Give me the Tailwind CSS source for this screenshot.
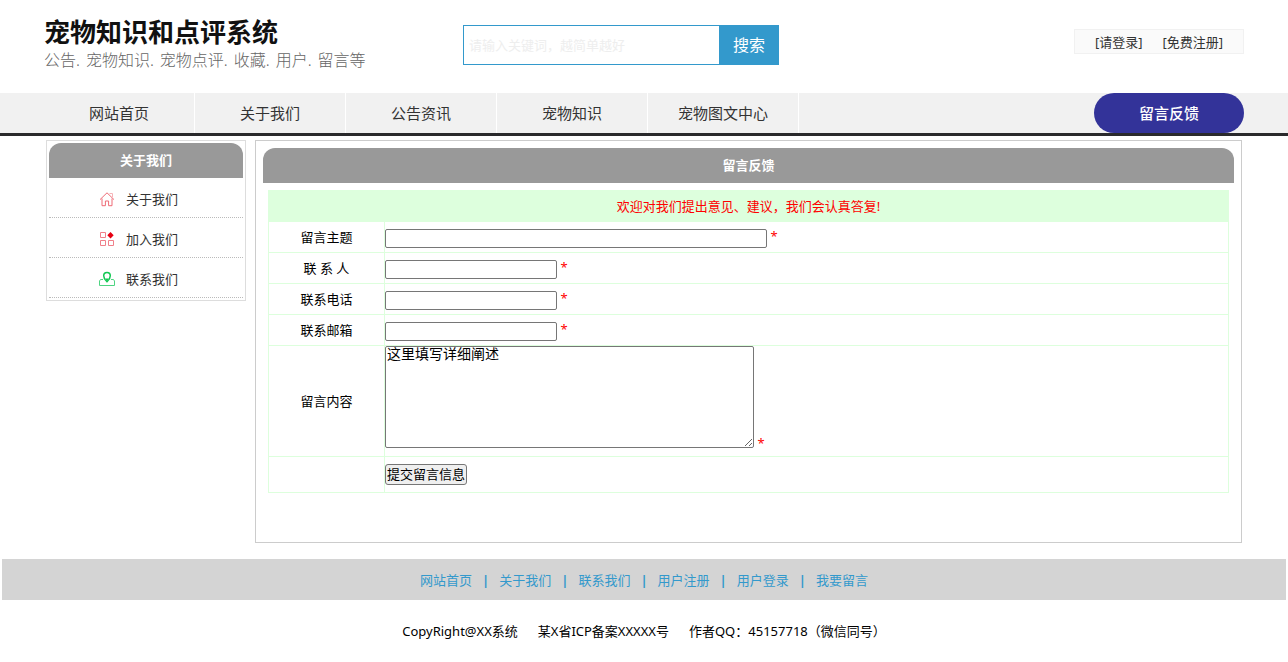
<!DOCTYPE html>
<html lang="zh-CN">
<head>
<meta charset="utf-8">
<meta name="viewport" content="width=device-width, initial-scale=1">
<title>留言反馈 - 宠物知识和点评系统</title>
<script src="https://cdn.jsdelivr.net/npm/@tailwindcss/browser@4"></script>
</head>
<body class="bg-white font-['Noto_Sans','Noto_Sans_CJK_SC',sans-serif] text-[13px] leading-5 text-black">

<header class="mx-auto flex h-[93px] max-w-[1200px] items-start">
  <div class="w-[419px] shrink-0 pt-4">
    <h1 class="text-[26px] leading-8 font-bold text-[#111]">宠物知识和点评系统</h1>
    <p class="flex gap-1.5 text-base leading-6 font-light text-[#666]"><span>公告.</span><span>宠物知识.</span><span>宠物点评.</span><span>收藏.</span><span>用户.</span><span>留言等</span></p>
  </div>
  <form class="mt-[25px] flex h-10 w-[316px] shrink-0">
    <input type="text" aria-label="关键词" placeholder="请输入关键词，越简单越好" class="min-w-0 flex-1 border border-r-0 border-[#3399cc] px-[5px] text-[13px] outline-none placeholder:text-[#eeeeee]">
    <button type="button" class="w-15 bg-[#3399cc] text-base text-white">搜索</button>
  </form>
  <div class="mt-[29px] ml-auto flex h-[25px] items-center justify-center gap-5 border border-[#f1f1f1] bg-[#fafafa] px-5 text-[#333]">
    <a href="#">[请登录]</a>
    <a href="#">[免费注册]</a>
  </div>
</header>

<nav class="border-b-[3px] border-[#2a2a2c] bg-[#f1f1f1]">
  <div class="mx-auto flex h-10 max-w-[1200px] text-[15px] leading-10 text-[#333]">
    <a href="#" class="w-[151px] border-r border-white text-center">网站首页</a>
    <a href="#" class="w-[151px] border-r border-white text-center">关于我们</a>
    <a href="#" class="w-[151px] border-r border-white text-center">公告资讯</a>
    <a href="#" class="w-[151px] border-r border-white text-center">宠物知识</a>
    <a href="#" class="w-[151px] border-r border-white text-center">宠物图文中心</a>
    <a href="#" class="ml-auto w-[150px] rounded-[20px] bg-[#333399] text-center font-medium text-white">留言反馈</a>
  </div>
</nav>

<div class="mx-auto mt-1 flex max-w-[1200px] items-start gap-[9px] px-0.5">
  <aside class="w-[200px] shrink-0 border border-[#dddddd] p-0.5">
    <h2 class="rounded-t-[12px] bg-[#999999] text-center leading-[35px] font-bold text-white">关于我们</h2>
    <ul class="text-[#333]">
      <li class="h-10 border-b border-dotted border-[#bbbbbb]">
        <a href="#" class="flex h-full items-center gap-[11px] pt-0.5 pl-[50px]">
          <svg class="h-4 w-4" viewBox="0 0 16 16" fill="none" stroke="#ee6b76" stroke-width="1"><path d="M1 8.600 8 1.800l7 6.800M3 7.500v7.200h3.400V10h3.200v4.700H13V7.500"/><path d="M10.500 2.500h3v3.500" stroke="#f7b4b8"/></svg>
          关于我们</a>
      </li>
      <li class="h-10 border-b border-dotted border-[#bbbbbb]">
        <a href="#" class="flex h-full items-center gap-[11px] pt-0.5 pl-[50px]">
          <svg class="h-4 w-4" viewBox="0 0 16 16" fill="none" stroke="#f0808a" stroke-width="1"><path d="M1.500 1.500h5v5h-5zM1.500 9.500h5v5h-5zM9.500 9.500h5v5h-5z"/><path d="m11.500 1 3.200 3.200-3.200 3.200-3.200-3.200z" fill="#e60012" stroke="none"/></svg>
          加入我们</a>
      </li>
      <li class="h-10 border-b border-dotted border-[#bbbbbb]">
        <a href="#" class="flex h-full items-center gap-[11px] pt-0.5 pl-[50px]">
          <svg class="h-4 w-4" viewBox="0 0 16 16" fill="none"><path d="M4 8.500H1.500l-1 1.500v4.500h15V10l-1-1.500H12" stroke="#4fd482"/><path d="M8 10.800C5.800 8.800 4.700 7 4.700 4.700a3.300 3.300 0 0 1 6.600 0C11.300 7 10.200 8.800 8 10.800z" stroke="#12c853" stroke-width="1.500"/><path d="M6 7.500h4L8 10.500z" fill="#12c853"/></svg>
          联系我们</a>
      </li>
    </ul>
  </aside>

  <main class="min-h-[403px] min-w-0 flex-1 border border-[#cccccc] p-[7px]">
    <h2 class="rounded-t-[12px] bg-[#999999] text-center leading-[35px] font-bold text-white">留言反馈</h2>
    <form class="px-[5px] pt-[7px]">
      <table class="w-full table-fixed border-collapse border border-[#ddffdd]">
        <colgroup><col class="w-[116px]"><col></colgroup>
        <thead>
          <tr class="h-[31px] bg-[#ddffdd] text-[#ff0000]"><th colspan="2" class="border border-[#ddffdd] p-0 text-center font-normal">欢迎对我们提出意见、建议，我们会认真答复!</th></tr>
        </thead>
        <tbody>
          <tr class="h-[31px]">
            <th class="border border-[#ddffdd] p-0 text-center font-normal"><label for="subject">留言主题</label></th>
            <td class="border border-[#ddffdd] p-0"><input id="subject" type="text" class="h-[19px] w-[382px] rounded-xs border border-[#767676] px-px align-middle"> <span class="text-[#ff0000]">*</span></td>
          </tr>
          <tr class="h-[31px]">
            <th class="border border-[#ddffdd] p-0 text-center font-normal"><label for="contact">联 系 人</label></th>
            <td class="border border-[#ddffdd] p-0"><input id="contact" type="text" class="h-[19px] w-[172px] rounded-xs border border-[#767676] px-px align-middle"> <span class="text-[#ff0000]">*</span></td>
          </tr>
          <tr class="h-[31px]">
            <th class="border border-[#ddffdd] p-0 text-center font-normal"><label for="phone">联系电话</label></th>
            <td class="border border-[#ddffdd] p-0"><input id="phone" type="tel" class="h-[19px] w-[172px] rounded-xs border border-[#767676] px-px align-middle"> <span class="text-[#ff0000]">*</span></td>
          </tr>
          <tr class="h-[31px]">
            <th class="border border-[#ddffdd] p-0 text-center font-normal"><label for="mail">联系邮箱</label></th>
            <td class="border border-[#ddffdd] p-0"><input id="mail" type="email" class="h-[19px] w-[172px] rounded-xs border border-[#767676] px-px align-middle"> <span class="text-[#ff0000]">*</span></td>
          </tr>
          <tr class="h-[111px]">
            <th class="border border-[#ddffdd] p-0 text-center font-normal"><label for="content">留言内容</label></th>
            <td class="border border-[#ddffdd] p-0 align-top"><textarea id="content" class="h-[102px] w-[369px] rounded-xs border border-[#767676] px-px align-baseline text-sm leading-[14px]">这里填写详细阐述</textarea> <span class="text-[#ff0000]">*</span></td>
          </tr>
          <tr class="h-9">
            <td class="border border-[#ddffdd] p-0"></td>
            <td class="border border-[#ddffdd] p-0"><button type="button" class="block h-[21px] rounded-[3px] border border-[#767676] bg-[#efefef] px-px leading-[19px]">提交留言信息</button></td>
          </tr>
        </tbody>
      </table>
    </form>
  </main>
</div>

<footer class="mt-4 px-0.5">
  <div class="flex h-[41px] items-center justify-center gap-2.5 bg-[#d4d4d4] text-[#3399cc]">
    <a href="#">网站首页</a><span class="font-bold">|</span>
    <a href="#">关于我们</a><span class="font-bold">|</span>
    <a href="#">联系我们</a><span class="font-bold">|</span>
    <a href="#">用户注册</a><span class="font-bold">|</span>
    <a href="#">用户登录</a><span class="font-bold">|</span>
    <a href="#">我要留言</a>
  </div>
  <p class="mt-[21px] flex justify-center gap-5"><span>CopyRight@XX系统</span><span>某X省ICP备案XXXXX号</span><span>作者QQ：45157718（微信同号）</span></p>
</footer>
</body>
</html>
